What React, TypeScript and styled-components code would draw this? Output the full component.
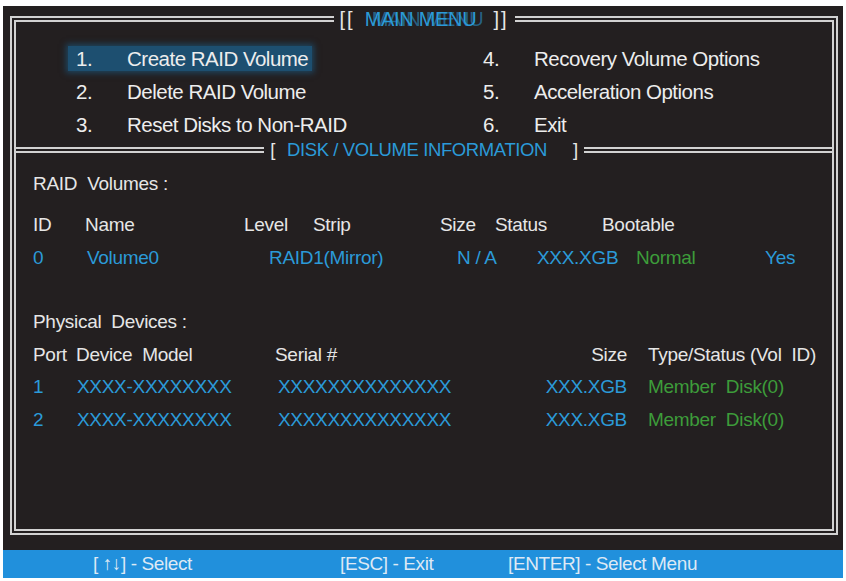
import React from 'react'
import styled, { createGlobalStyle } from 'styled-components'

const GlobalStyle = createGlobalStyle`
  html, body {
    margin: 0;
    padding: 0;
    background: #ffffff;
  }
  body {
    font-family: "Liberation Sans", Arial, sans-serif;
  }
`

const WHITE = '#e6e6e6'
const BLUE = '#2b9ad8'
const GREEN = '#3d9c3a'
const LINE = '#d2d2d2'

const Screen = styled.div`
  width: 840px;
  height: 544px;
  margin: 6px 0 0 3px;
  padding: 1px 5px 0 7px;
  box-sizing: border-box;
  background: #231f20;
  color: ${WHITE};
`

const Frame = styled.fieldset`
  margin: 0;
  padding: 0;
  min-width: 0;
  height: 528px;
  box-sizing: border-box;
  border: 6px double ${LINE};
`

const Legend = styled.legend`
  margin: 0 auto;
  padding: 0 6px;
  display: flex;
  align-items: center;
  gap: 10px;
  font-size: 20px;
  line-height: 24px;
  letter-spacing: -0.3px;
`

const Bracket = styled.span`
  color: ${WHITE};
  letter-spacing: 2px;
`

const GhostTitle = styled.span`
  color: ${BLUE};
  text-shadow: 7px 0 0 rgba(43, 154, 216, 0.55);
  padding-right: 7px;
`

const MenuGrid = styled.div`
  display: grid;
  grid-template-columns: 407px 1fr;
  grid-template-rows: repeat(3, 25px);
  grid-auto-flow: column;
  row-gap: 8px;
  padding: 15px 0 0 52px;
  font-size: 20.5px;
  letter-spacing: -0.5px;
  color: #ededed;
`

const MenuItem = styled.div<{ $active?: boolean }>`
  display: flex;
  align-items: center;
  width: fit-content;
  height: 25px;
  padding: 0 4px 0 8px;
  background: ${({ $active }) => ($active ? '#1d4f70' : 'transparent')};
  box-shadow: ${({ $active }) => ($active ? '0 0 6px 2px rgba(29, 79, 112, 0.8)' : 'none')};
`

const MenuNum = styled.span`
  width: 51px;
`

const Separator = styled.div`
  display: flex;
  align-items: center;
  height: 24px;
  margin-top: 1px;
`

const Rule = styled.div`
  flex: 1;
  height: 6px;
  box-sizing: border-box;
  border-top: 2px solid ${LINE};
  border-bottom: 2px solid ${LINE};
`

const SepTitle = styled.div`
  display: flex;
  align-items: center;
  padding: 0 6px;
  font-size: 18.5px;
  line-height: 24px;
  letter-spacing: -0.4px;
`

const SepText = styled.span`
  color: ${BLUE};
  padding: 0 26px 0 12px;
`

const Info = styled.div`
  padding-left: 17px;
  font-size: 19px;
  letter-spacing: -0.3px;
`

const Line = styled.div<{ $top?: number }>`
  display: flex;
  height: 32px;
  line-height: 32px;
  margin-top: ${({ $top }) => $top ?? 0}px;
  white-space: pre;
`

const Cell = styled.span<{ $w?: number; $color?: string; $right?: boolean; $pl?: number }>`
  flex: none;
  width: ${({ $w }) => ($w ? `${$w}px` : 'auto')};
  padding-left: ${({ $pl }) => $pl ?? 0}px;
  color: ${({ $color }) => $color ?? 'inherit'};
  text-align: ${({ $right }) => ($right ? 'right' : 'left')};
`

const StatusBar = styled.div`
  display: flex;
  align-items: center;
  width: 840px;
  height: 28px;
  margin-left: 3px;
  padding-left: 90px;
  box-sizing: border-box;
  background: #2190dc;
  color: #dde9f5;
  font-size: 19px;
  letter-spacing: -0.4px;
`

const menu = [
  ['1.', 'Create  RAID  Volume'],
  ['2.', 'Delete  RAID  Volume'],
  ['3.', 'Reset Disks to Non-RAID'],
  ['4.', 'Recovery Volume  Options'],
  ['5.', 'Acceleration Options'],
  ['6.', 'Exit'],
]

const devices = ['1', '2']

export default function App() {
  return (
    <>
      <GlobalStyle />
      <Screen>
        <Frame>
          <Legend>
            <Bracket>[[</Bracket>
            <GhostTitle>MAIN MENU</GhostTitle>
            <Bracket>]]</Bracket>
          </Legend>

          <MenuGrid>
            {menu.map(([num, label], i) => (
              <MenuItem key={num} $active={i === 0}>
                <MenuNum>{num}</MenuNum>
                <span>{label}</span>
              </MenuItem>
            ))}
          </MenuGrid>

          <Separator>
            <Rule />
            <SepTitle>
              <span>[</span>
              <SepText>DISK / VOLUME INFORMATION</SepText>
              <span>]</span>
            </SepTitle>
            <Rule />
          </Separator>

          <Info>
            <Line $top={6}>RAID  Volumes :</Line>
            <Line $top={9}>
              <Cell $w={52}>ID</Cell>
              <Cell $w={159}>Name</Cell>
              <Cell $w={69}>Level</Cell>
              <Cell $w={127}>Strip</Cell>
              <Cell $w={55}>Size</Cell>
              <Cell $w={107}>Status</Cell>
              <Cell>Bootable</Cell>
            </Line>
            <Line $top={1}>
              <Cell $w={54} $color={BLUE}>0</Cell>
              <Cell $w={182} $color={BLUE}>Volume0</Cell>
              <Cell $w={188} $color={BLUE}>RAID1(Mirror)</Cell>
              <Cell $w={80} $color={BLUE}>N / A</Cell>
              <Cell $w={99} $color={BLUE}>XXX.XGB</Cell>
              <Cell $w={129} $color={GREEN}>Normal</Cell>
              <Cell $color={BLUE}>Yes</Cell>
            </Line>

            <Line $top={32}>Physical  Devices :</Line>
            <Line $top={1}>
              <Cell $w={43}>Port</Cell>
              <Cell $w={199}>Device  Model</Cell>
              <Cell $w={300}>Serial #</Cell>
              <Cell $w={52} $right>Size</Cell>
              <Cell $pl={21}>Type/Status (Vol  ID)</Cell>
            </Line>
            {devices.map((port) => (
              <Line key={port} $top={port === '1' ? 0 : 1}>
                <Cell $w={44} $color={BLUE}>{port}</Cell>
                <Cell $w={201} $color={BLUE}>XXXX-XXXXXXXX</Cell>
                <Cell $w={200} $color={BLUE}>XXXXXXXXXXXXXX</Cell>
                <Cell $w={149} $right $color={BLUE}>XXX.XGB</Cell>
                <Cell $pl={21} $color={GREEN}>Member  Disk(0)</Cell>
              </Line>
            ))}
          </Info>
        </Frame>
      </Screen>
      <StatusBar>
        <Cell $w={247}>[ ↑↓] - Select</Cell>
        <Cell $w={168}>[ESC] - Exit</Cell>
        <Cell>[ENTER] - Select Menu</Cell>
      </StatusBar>
    </>
  )
}
